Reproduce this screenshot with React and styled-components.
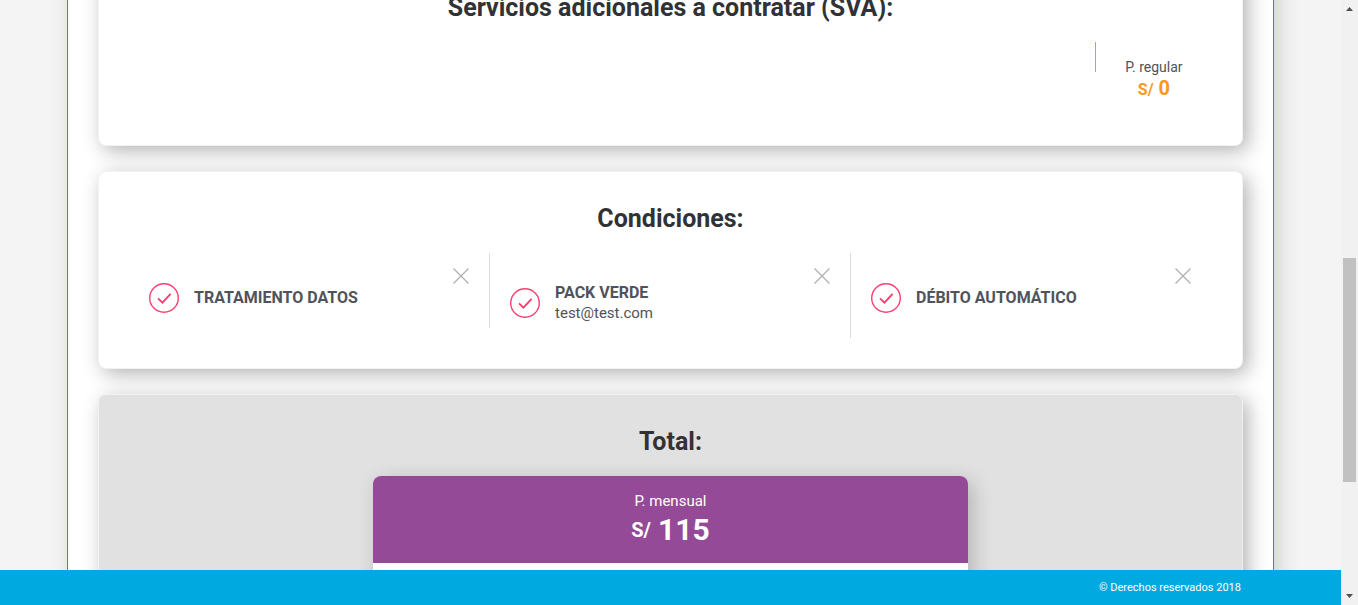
import React from 'react';
import styled, { createGlobalStyle } from 'styled-components';

const GlobalStyle = createGlobalStyle`
  *, *::before, *::after { box-sizing: border-box; }
  body { margin: 0; background: #f4f4f4; color: #50535a; font: 16px/20px Roboto, sans-serif; }
`;

const Shell = styled.div`
  display: flex;
  height: 100vh;
  overflow: hidden;
`;

const Page = styled.div`
  flex: 1;
  min-width: 0;
  display: flex;
  flex-direction: column;
`;

const Viewport = styled.main`
  flex: 1;
  min-height: 0;
  overflow: hidden;
`;

const Sheet = styled.div`
  width: 90%;
  min-height: 100%;
  margin: -40px auto 0;
  padding: 0 30px 30px;
  display: flex;
  flex-direction: column;
  gap: 25px;
  background: #fff;
  border: solid #019cd5;
  border-width: 0 1px;
  box-shadow: 5px 5px 20px rgba(0, 0, 0, 0.15);
`;

const Card = styled.section`
  padding: 30px;
  border: 1px solid #f2f2f2;
  border-radius: 8px;
  background: ${(p) => (p.$muted ? '#e1e1e1' : '#fff')};
  box-shadow: 5px 5px 20px rgba(0, 0, 0, 0.3);
`;

const Title = styled.h2`
  margin: 0 0 18px;
  color: #313235;
  font-size: 25px;
  font-weight: 700;
  line-height: 33px;
  text-align: center;
`;

const PriceRow = styled.div`
  display: flex;
  justify-content: flex-end;
`;

const Separator = styled.span`
  width: 1px;
  height: 30px;
  background: #f59c00;
`;

const RegularPrice = styled.div`
  width: 116px;
  padding: 15px 0;
  font-size: 14px;
  text-align: center;
`;

const RegularAmount = styled.div`
  color: #f8991d;
  font-size: 20px;
  font-weight: 700;
  line-height: 23px;
`;

const SmallCurrency = styled.span`
  font-size: 16px;
  line-height: 16px;
`;

const Conditions = styled.ul`
  display: flex;
  align-items: flex-start;
  margin: 0;
  padding: 0;
  list-style: none;
`;

const Condition = styled.li`
  flex: 1;
  display: flex;
  align-items: flex-start;
  justify-content: space-between;
  padding: 0 20px;
  border-right: 1px solid #dcdcdc;
  &:last-child { border-right-color: transparent; }
`;

const ConditionBody = styled.div`
  display: flex;
  align-items: center;
  gap: 15px;
  padding: 30px 0 15px;
`;

const ConditionName = styled.strong`
  display: block;
`;

const ConditionDetail = styled.span`
  display: block;
  font-size: 15px;
`;

const CloseButton = styled.button`
  display: block;
  margin: 15px 0 0;
  padding: 0;
  border: 0;
  background: none;
  color: #b0b0b0;
  cursor: pointer;
  svg { display: block; }
`;

const TotalBox = styled.div`
  width: 55%;
  margin: 0 auto;
  padding-bottom: 60px;
  border-radius: 8px;
  background: #fff;
  box-shadow: 5px 5px 20px rgba(0, 0, 0, 0.2);
`;

const TotalHead = styled.div`
  padding: 15px;
  border-radius: 8px 8px 0 0;
  background: #954a97;
  color: #fff;
  font-size: 15px;
  text-align: center;
`;

const TotalAmount = styled.div`
  display: flex;
  align-items: center;
  justify-content: center;
  gap: 7px;
  font-size: 30px;
  font-weight: 700;
  line-height: 37px;
`;

const Currency = styled.span`
  font-size: 20px;
  line-height: 20px;
`;

const Footer = styled.footer`
  display: flex;
  align-items: center;
  justify-content: flex-end;
  height: 35px;
  padding: 1px calc(5% + 33px) 0;
  background: #00a9e0;
  color: #fff;
  font-size: 11px;
  position: relative;
`;

const ScrollTrack = styled.div`
  display: flex;
  flex-direction: column;
  align-items: center;
  width: 17px;
  background: #f1f1f1;
  position: relative;
`;

const ScrollSpace = styled.div`
  flex: ${(p) => p.$grow};
`;

const ScrollThumb = styled.div`
  flex: 224;
  width: 13px;
  background: #c1c1c1;
`;

const ScrollArrow = styled.svg`
  display: block;
  width: 17px;
  height: 17px;
  fill: #505050;
`;

function CheckIcon() {
  return (
    <svg width="30" height="30" viewBox="0 0 30 30" fill="none" stroke="#ff3c70" aria-hidden="true">
      <circle cx="15" cy="15" r="14.3" strokeWidth="1.4" />
      <path d="M9 15.4l4.4 4.2 8.2-8.8" strokeWidth="1.9" />
    </svg>
  );
}

function CloseIcon() {
  return (
    <svg width="16" height="16" viewBox="0 0 16 16" fill="none" stroke="currentColor" strokeWidth="1.3" aria-hidden="true">
      <path d="M.5.5l15 15M15.5.5l-15 15" />
    </svg>
  );
}

const conditions = [
  { name: 'TRATAMIENTO DATOS' },
  { name: 'PACK VERDE', detail: 'test@test.com' },
  { name: 'DÉBITO AUTOMÁTICO' },
];

export default function App() {
  return (
    <>
      <GlobalStyle />
      <Shell>
        <Page>
          <Viewport>
            <Sheet>
              <Card>
                <Title>Servicios adicionales a contratar (SVA):</Title>
                <PriceRow>
                  <Separator />
                  <RegularPrice>
                    P. regular
                    <RegularAmount>
                      <SmallCurrency>S/</SmallCurrency> 0
                    </RegularAmount>
                  </RegularPrice>
                </PriceRow>
              </Card>
              <Card>
                <Title>Condiciones:</Title>
                <Conditions>
                  {conditions.map((c) => (
                    <Condition key={c.name}>
                      <ConditionBody>
                        <CheckIcon />
                        <div>
                          <ConditionName>{c.name}</ConditionName>
                          {c.detail && <ConditionDetail>{c.detail}</ConditionDetail>}
                        </div>
                      </ConditionBody>
                      <CloseButton type="button" aria-label={`Quitar ${c.name}`}>
                        <CloseIcon />
                      </CloseButton>
                    </Condition>
                  ))}
                </Conditions>
              </Card>
              <Card $muted>
                <Title>Total:</Title>
                <TotalBox>
                  <TotalHead>
                    P. mensual
                    <TotalAmount>
                      <Currency>S/</Currency>
                      <span>115</span>
                    </TotalAmount>
                  </TotalHead>
                </TotalBox>
              </Card>
            </Sheet>
          </Viewport>
          <Footer>© Derechos reservados 2018</Footer>
        </Page>
        <ScrollTrack aria-hidden="true">
          <ScrollArrow viewBox="0 0 17 17"><path d="M5 11h7L8.5 7z" /></ScrollArrow>
          <ScrollSpace $grow={241} />
          <ScrollThumb />
          <ScrollSpace $grow={106} />
          <ScrollArrow viewBox="0 0 17 17"><path d="M5 6h7L8.5 10z" /></ScrollArrow>
        </ScrollTrack>
      </Shell>
    </>
  );
}
